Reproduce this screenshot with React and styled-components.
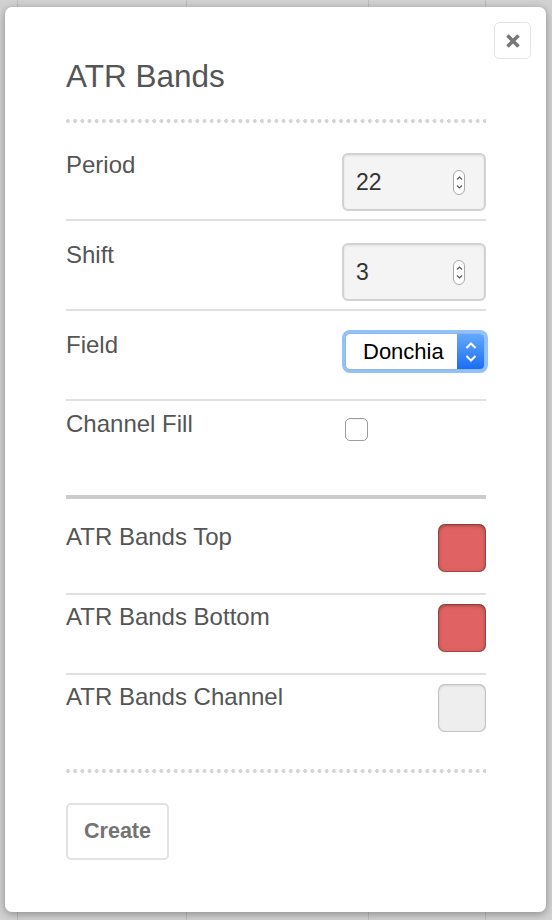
import React from 'react';
import styled, { createGlobalStyle } from 'styled-components';

const GlobalStyle = createGlobalStyle`
  html, body { margin: 0; padding: 0; }
  body {
    background: #d2d2d2;
    font-family: "Liberation Sans", Helvetica, Arial, sans-serif;
  }
`;

const Page = styled.div`
  width: 552px;
  height: 920px;
  box-sizing: border-box;
  padding: 7px 6px 8px 5px;
  background:
    linear-gradient(90deg, transparent 17px, #bdbdbd 17px, #bdbdbd 18px, transparent 18px),
    linear-gradient(90deg, transparent 186px, #bdbdbd 186px, #bdbdbd 187px, transparent 187px),
    linear-gradient(90deg, transparent 368px, #bdbdbd 368px, #bdbdbd 369px, transparent 369px),
    linear-gradient(90deg, transparent 485px, #bdbdbd 485px, #bdbdbd 486px, transparent 486px),
    #d2d2d2;
`;

const Modal = styled.div`
  position: relative;
  height: 905px;
  box-sizing: border-box;
  background: #fff;
  border-radius: 7px;
  box-shadow: 0 2px 8px rgba(0, 0, 0, 0.35);
  padding: 53px 60px 0 61px;
`;

const CloseButton = styled.button`
  position: absolute;
  top: 15px;
  right: 15px;
  width: 37px;
  height: 37px;
  padding: 0;
  box-sizing: border-box;
  border: 1.5px solid #e4e4e4;
  border-radius: 5px;
  background: #fff;
  display: flex;
  align-items: center;
  justify-content: center;
`;

const Title = styled.h2`
  margin: 0;
  font-size: 31.5px;
  line-height: 33px;
  font-weight: normal;
  color: #555;
`;

const DottedRule = styled.div`
  height: 4px;
  margin-top: ${p => p.$mt}px;
  margin-bottom: ${p => p.$mb}px;
  background-image: radial-gradient(circle at 2px 2px, #d4d4d4 1.7px, transparent 2.2px);
  background-size: 7.2px 4px;
  background-repeat: repeat-x;
`;

const ThickRule = styled.div`
  height: 4px;
  background: #cccccc;
  margin-bottom: 16px;
`;

const Row = styled.div`
  display: grid;
  grid-template-columns: 1fr 144px;
  align-items: start;
  box-sizing: border-box;
  height: ${p => p.$h}px;
  padding-top: ${p => p.$pt}px;
  border-bottom: ${p => (p.$line ? '2px solid #e1e1e1' : 'none')};
`;

const Label = styled.div`
  font-size: 24px;
  line-height: 28px;
  color: #555;
`;

const NumberBox = styled.div`
  margin-top: 2px;
  width: 144px;
  height: 58px;
  box-sizing: border-box;
  border: 2px solid #d2d2d2;
  border-radius: 6px;
  background: #f4f4f4;
  box-shadow: inset 0 1px 3px rgba(0, 0, 0, 0.08);
  display: flex;
  align-items: center;
  justify-content: space-between;
  padding: 0 19px 0 12px;
  font-size: 23px;
  color: #333;
`;

const Spinner = styled.div`
  width: 12px;
  height: 25px;
  box-sizing: border-box;
  border: 1px solid #a9a9a9;
  border-radius: 6px;
  background: #fff;
  display: flex;
  align-items: center;
  justify-content: center;
`;

const SelectBox = styled.div`
  margin: 2px 0 0 3px;
  width: 140px;
  height: 37px;
  box-sizing: border-box;
  border: 1px solid #8fb6ea;
  border-radius: 5px;
  box-shadow: 0 0 0 3px #93c1f8;
  background: #fff;
  display: flex;
  overflow: hidden;
`;

const SelectText = styled.div`
  flex: 1;
  padding-left: 17px;
  font-size: 22px;
  line-height: 35px;
  color: #000;
`;

const SelectArrow = styled.div`
  width: 27px;
  background: linear-gradient(#64a9fb, #1a6ff1);
  display: flex;
  align-items: center;
  justify-content: center;
`;

const Checkbox = styled.div`
  margin: 8px 0 0 3px;
  width: 23px;
  height: 23px;
  box-sizing: border-box;
  border: 1px solid #9d9d9d;
  border-radius: 5px;
  background: #fff;
  box-shadow: inset 0 1px 1px rgba(0, 0, 0, 0.06);
`;

const Swatch = styled.div`
  justify-self: end;
  margin-top: 1px;
  width: 48px;
  height: 48px;
  border-radius: 7px;
  background: ${p => p.$color};
  box-shadow: ${p =>
    p.$light
      ? 'inset 0 0 0 1px #c4c4c4, inset 0 1px 3px rgba(0,0,0,0.2)'
      : 'inset 0 0 0 1px rgba(0,0,0,0.18), inset 0 1px 4px rgba(0,0,0,0.4)'};
`;

const CreateButton = styled.button`
  margin-top: 30px;
  width: 103px;
  height: 57px;
  box-sizing: border-box;
  border: 2px solid #e2e2e2;
  border-radius: 5px;
  background: #fff;
  padding: 0;
  font-family: inherit;
  font-weight: bold;
  font-size: 21.5px;
  color: #737373;
`;

const SpinIcon = () => (
  <svg width="7" height="19" viewBox="0 0 7 19">
    <path d="M1 6.5 L3.5 4 L6 6.5" fill="none" stroke="#555" strokeWidth="1.1" />
    <path d="M1 12.5 L3.5 15 L6 12.5" fill="none" stroke="#555" strokeWidth="1.1" />
  </svg>
);

const NumberField = ({ value }) => (
  <NumberBox>
    <span>{value}</span>
    <Spinner>
      <SpinIcon />
    </Spinner>
  </NumberBox>
);

export default function App() {
  return (
    <>
      <GlobalStyle />
      <Page>
        <Modal>
          <CloseButton aria-label="close">
            <svg width="16" height="16" viewBox="0 0 16 16">
              <path d="M2.5 2.5 L13.5 13.5 M13.5 2.5 L2.5 13.5" stroke="#777" strokeWidth="3.6" />
            </svg>
          </CloseButton>
          <Title>ATR Bands</Title>
          <DottedRule $mt={26} $mb={8} />

          <Row $h={90} $pt={20} $line>
            <Label>Period</Label>
            <NumberField value="22" />
          </Row>
          <Row $h={90} $pt={20} $line>
            <Label>Shift</Label>
            <NumberField value="3" />
          </Row>
          <Row $h={90} $pt={20} $line>
            <Label>Field</Label>
            <SelectBox>
              <SelectText>Donchia</SelectText>
              <SelectArrow>
                <svg width="12" height="26" viewBox="0 0 12 26">
                  <path d="M1.5 9 L6 4.5 L10.5 9" fill="none" stroke="#fff" strokeWidth="2" />
                  <path d="M1.5 17 L6 21.5 L10.5 17" fill="none" stroke="#fff" strokeWidth="2" />
                </svg>
              </SelectArrow>
            </SelectBox>
          </Row>
          <Row $h={94} $pt={9}>
            <Label>Channel Fill</Label>
            <Checkbox />
          </Row>

          <ThickRule />

          <Row $h={80} $pt={8} $line>
            <Label>ATR Bands Top</Label>
            <Swatch $color="#e06262" />
          </Row>
          <Row $h={80} $pt={8} $line>
            <Label>ATR Bands Bottom</Label>
            <Swatch $color="#e06262" />
          </Row>
          <Row $h={80} $pt={8}>
            <Label>ATR Bands Channel</Label>
            <Swatch $color="#eeeeee" $light />
          </Row>

          <DottedRule $mt={14} $mb={0} />
          <CreateButton>Create</CreateButton>
        </Modal>
      </Page>
    </>
  );
}
